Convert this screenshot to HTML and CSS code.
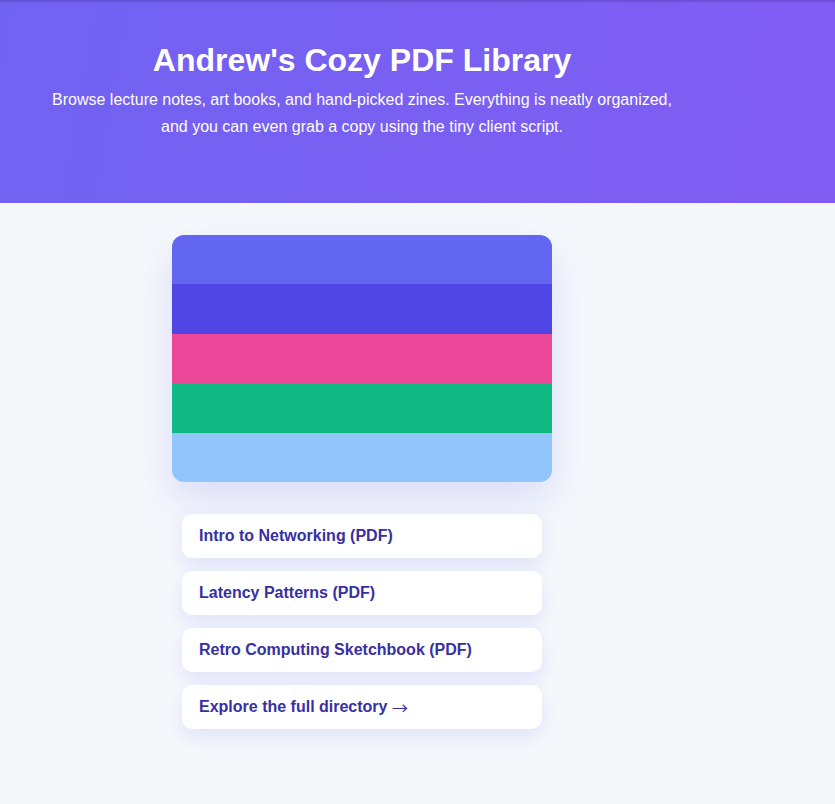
FILE: index.html
```html
<!DOCTYPE html>
<html lang="en">
<head>
<meta charset="utf-8">
<title>Andrew's Cozy PDF Library</title>
<link rel="stylesheet" href="styles.css">
</head>
<body>
<header class="hero">
  <div class="hero-inner">
    <h1 class="title">Andrew's Cozy PDF Library</h1>
    <p class="lead">Browse lecture notes, art books, and hand-picked zines. Everything is neatly organized, and you can even grab a copy using the tiny client script.</p>
  </div>
</header>
<main class="main">
  <div class="column">
    <div class="cover">
      <div class="stripe s1"></div>
      <div class="stripe s2"></div>
      <div class="stripe s3"></div>
      <div class="stripe s4"></div>
      <div class="stripe s5"></div>
    </div>
    <nav class="links">
      <a class="link" href="#">Intro to Networking (PDF)</a>
      <a class="link" href="#">Latency Patterns (PDF)</a>
      <a class="link" href="#">Retro Computing Sketchbook (PDF)</a>
      <a class="link" href="#">Explore the full directory&nbsp;<span class="arrow">→</span></a>
    </nav>
  </div>
</main>
</body>
</html>
```
FILE: styles.css
```css
* { box-sizing: border-box; }
html, body { margin: 0; padding: 0; }
body {
  background: #f5f8fb;
  font-family: "Liberation Sans", Arial, sans-serif;
  min-height: 804px;
}
.hero {
  height: 203px;
  background:
    linear-gradient(to bottom, rgba(40, 20, 120, 0.28) 0, rgba(40, 20, 120, 0) 3px),
    linear-gradient(100deg, #7163f1 0%, #7a5ff2 60%, #815cf3 100%);
  color: #fff;
}
.hero-inner {
  width: 724px;
  padding-top: 40px;
  text-align: center;
}
.title {
  margin: 0;
  font-size: 32px;
  font-weight: 700;
  line-height: 40px;
}
.lead {
  margin: 6px auto 0;
  width: 640px;
  font-size: 16px;
  line-height: 27px;
  color: #fdfcff;
}
.main {
  padding-top: 32px;
}
.column {
  width: 724px;
  display: flex;
  flex-direction: column;
  align-items: center;
}
.cover {
  width: 380px;
  height: 247px;
  border-radius: 12px;
  overflow: hidden;
  display: flex;
  flex-direction: column;
  box-shadow: 0 18px 40px rgba(99, 102, 241, 0.18);
}
.stripe { flex: 1; }
.s1 { background: #6366f1; }
.s2 { background: #4f46e5; }
.s3 { background: #ec4899; }
.s4 { background: #10b981; }
.s5 { background: #93c5fd; }
.links {
  margin-top: 32px;
  display: flex;
  flex-direction: column;
  gap: 13px;
}
.link {
  width: 360px;
  height: 44px;
  display: flex;
  align-items: center;
  padding-left: 17px;
  background: #fff;
  border-radius: 10px;
  color: #3730a3;
  font-size: 16px;
  font-weight: 700;
  text-decoration: none;
  white-space: pre;
  box-shadow: 0 8px 20px rgba(99, 102, 241, 0.14);
}
.arrow {
  font-family: "Noto Sans CJK SC", sans-serif;
  font-weight: 400;
  line-height: 1;
}
```
